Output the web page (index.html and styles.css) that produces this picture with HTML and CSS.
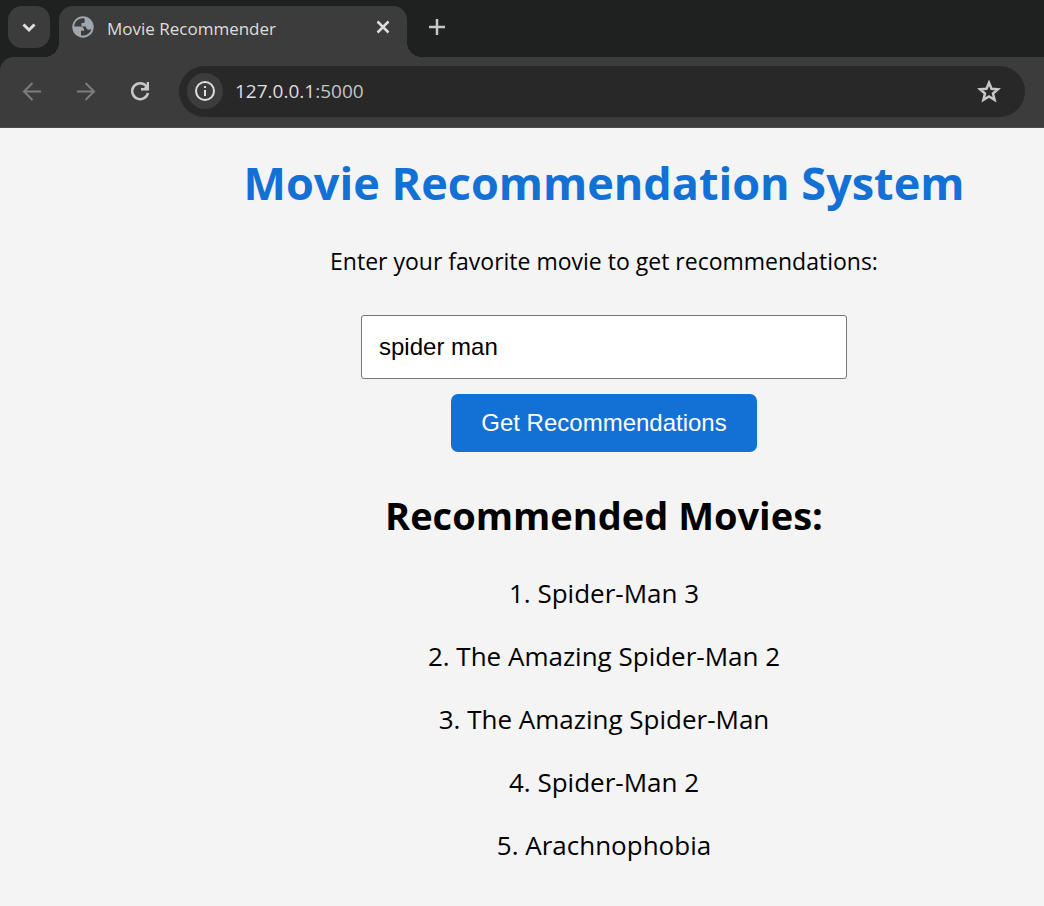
FILE: index.html
```html
<!DOCTYPE html>
<html lang="en">
<head>
<meta charset="utf-8">
<title>Movie Recommender</title>
<link rel="stylesheet" href="styles.css">
</head>
<body>
<header class="browser">
  <div class="tabstrip">
    <button class="tab-search" aria-label="Search tabs"><svg class="bold" width="20" height="20" viewBox="0 0 20 20"><path d="M4.500 7.500l5.500 5.500 5.500-5.500"/></svg></button>
    <div class="tab">
      <svg class="globe" width="22" height="22" viewBox="0 0 22 22"><circle cx="11" cy="11" r="10.700"/><path d="M12 2.200C6.500 1.600 2.400 5.600 2.200 10.500H8c2.500 0 4.200 1.600 4.200 4.200H9v4.700c5 1 9.200-1.900 10.400-6.400-1 .6-2 .9-3 .7-1.700-.3-2.400-1.400-2.400-3.100H9.500V7h2.200c1.200 0 1-1.500 1-2.500 0-.8-.2-1.600-.7-2.300z"/></svg>
      <span class="tab-title">Movie Recommender</span>
      <button class="plain" aria-label="Close tab"><svg class="medium" width="18" height="18" viewBox="0 0 18 18"><path d="M3.500 3.500l11 11M14.500 3.500l-11 11"/></svg></button>
    </div>
    <button class="plain new-tab" aria-label="New tab"><svg class="medium" width="20" height="20" viewBox="0 0 20 20"><path d="M10 2v16M2 10h16"/></svg></button>
  </div>
  <div class="toolbar">
    <button class="plain dim" aria-label="Back"><svg width="24" height="24" viewBox="0 0 24 24"><path d="M21 12.500H4M12.500 4L4 12.500l8.500 8.500"/></svg></button>
    <button class="plain dim" aria-label="Forward"><svg width="24" height="24" viewBox="0 0 24 24"><path d="M3 12.500h17M11.500 4l8.500 8.500-8.500 8.500"/></svg></button>
    <button class="plain reload" aria-label="Reload"><svg class="medium" width="24" height="24" viewBox="0 0 24 24"><path d="M18.500 7.200A8 8 0 1 0 20 14"/><path class="solid" d="M21 3v8.500h-8V9h3l2.700-3V3z"/></svg></button>
    <div class="address">
      <button class="info" aria-label="Site information"><svg width="22" height="22" viewBox="0 0 22 22"><circle cx="11" cy="11" r="9"/><path d="M11 10v6M11 6v2"/></svg></button>
      <span class="url">127.0.0.1<span class="port">:5000</span></span>
      <button class="plain bookmark" aria-label="Bookmark"><svg class="medium" width="24" height="24" viewBox="0 0 24 24"><path d="M12 3.700l2.500 6 6.500.5-5 4.300 1.600 6.400-5.600-3.400-5.600 3.400L8 14.500l-5-4.300 6.500-.5z"/></svg></button>
    </div>
  </div>
</header>
<main class="page">
  <h1>Movie Recommendation System</h1>
  <form class="search">
    <label for="movie">Enter your favorite movie to get recommendations:</label>
    <input id="movie" type="text" value="spider man">
    <button class="submit" type="button">Get Recommendations</button>
  </form>
  <h2>Recommended Movies:</h2>
  <ul class="movies">
    <li>1. Spider-Man 3</li>
    <li>2. The Amazing Spider-Man 2</li>
    <li>3. The Amazing Spider-Man</li>
    <li>4. Spider-Man 2</li>
    <li>5. Arachnophobia</li>
  </ul>
</main>
</body>
</html>
```
FILE: styles.css
```css
* { box-sizing: border-box; }
body { margin: 0; background: #f4f4f4; color: #000; font-family: "Segoe UI", "Open Sans", "Noto Sans", sans-serif; }
button { border: 0; padding: 0; color: inherit; }
svg { display: block; fill: none; stroke: currentColor; stroke-width: 2; }
.medium { stroke-width: 2.5; }
.bold { stroke-width: 3; }
.solid { fill: currentColor; stroke: none; }
.browser { background: #1f2020; color: #dedede; }
.tabstrip { display: flex; height: 57px; padding: 6px 8px 0; }
.tab-search { display: grid; place-items: center; width: 42px; height: 42px; border-radius: 14px; background: #3c3c3c; }
.tab { position: relative; display: flex; align-items: center; width: 348px; margin-left: 9px; padding: 0 15px 9px 13px; border-radius: 14px 14px 0 0; background: #3c3c3c; }
.tab::before, .tab::after { content: ""; position: absolute; bottom: 0; width: 15px; height: 15px; }
.tab::before { right: 100%; background: radial-gradient(circle at 0 0, transparent 15px, #3c3c3c 15px); }
.tab::after { left: 100%; background: radial-gradient(circle at 100% 0, transparent 15px, #3c3c3c 15px); }
.tab-title { flex: 1; margin-left: 13px; padding-top: 2px; font-size: 17px; }
.globe circle { fill: #a0a6ad; stroke: none; }
.globe path { fill: #3c3c3c; stroke: none; }
.plain { background: none; }
.new-tab { align-self: flex-start; margin: 11px 0 0 20px; color: #c7c7c7; }
.toolbar { display: flex; align-items: center; gap: 30px; height: 71px; padding: 0 19px 2px 20px; border-bottom: 1px solid #4a4a4a; border-radius: 14px 0 0 0; background: #3c3c3c; }
.dim { color: #7d7d7d; }
.reload, .bookmark { color: #c7c7c7; }
.address { display: flex; flex: 1; align-items: center; height: 51px; margin-left: -3px; padding: 0 24px 0 8px; border-radius: 26px; background: #282828; }
.info { display: grid; place-items: center; width: 36px; height: 36px; border-radius: 50%; background: #3c3c3c; }
.url { flex: 1; margin-left: 12px; font-size: 19px; }
.port { color: #c4c4c4; }
.page { padding: 19px 0 20px 164px; text-align: center; }
h1 { margin: 0; color: #1370d4; font-size: 45px; line-height: 72px; }
.search { display: flex; flex-direction: column; align-items: center; }
label { margin-top: 24px; font-size: 23px; line-height: 36px; }
input { width: 486px; height: 64px; margin-top: 36px; padding: 0 17px; border: 1px solid #767676; border-radius: 3px; background: #fff; font: 24px "Liberation Sans", Arial, sans-serif; }
.submit { width: 306px; height: 58px; margin-top: 15px; border-radius: 7px; background: #1370d4; color: #fff; font: 24px "Liberation Sans", Arial, sans-serif; }
h2 { margin: 33px 0 0; font-size: 38px; line-height: 60px; }
.movies { margin: 17px 0 0; padding: 0; list-style: none; font-size: 26px; }
.movies li { line-height: 63px; }
```
